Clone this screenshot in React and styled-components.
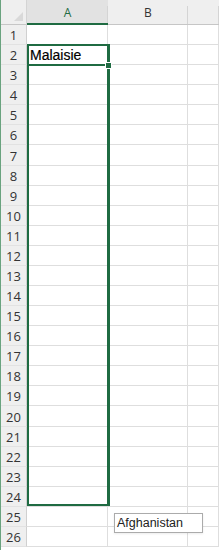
import React from "react";
import styled, { createGlobalStyle } from "styled-components";

const Global = createGlobalStyle`
  html, body { margin: 0; padding: 0; background: #fff; overflow: hidden; }
  #root { width: 219px; height: 550px; }
`;

const GREEN = "#1f6b42";
const GRID = "#dedede";
const HEAD_BG = "#efefef";

const Sheet = styled.div`
  position: relative;
  width: 219px;
  height: 550px;
  overflow: hidden;
  box-sizing: border-box;
  border-left: 1px solid #6aa37f;
  background: #fff;
`;

const Columns = `26px 81px 80px 1fr`;

const HeaderRow = styled.div`
  display: grid;
  grid-template-columns: ${Columns};
  height: 25px;
`;

const Corner = styled.div`
  position: relative;
  background: ${HEAD_BG};
  box-sizing: border-box;
  border-right: 1px solid #d4d4d4;
  border-bottom: 1px solid #c6c6c6;
  &::after {
    content: "";
    position: absolute;
    right: 3px;
    bottom: 3px;
    width: 0;
    height: 0;
    border-left: 9px solid transparent;
    border-bottom: 9px solid #d9d9d9;
  }
`;

const ColHeader = styled.div`
  position: relative;
  display: flex;
  align-items: center;
  justify-content: center;
  box-sizing: border-box;
  padding-top: 1px;
  background: ${(p) => (p.$selected ? "#e2e2e2" : HEAD_BG)};
  border-bottom: ${(p) => (p.$selected ? `2px solid ${GREEN}` : "1px solid #c6c6c6")};
  color: ${(p) => (p.$selected ? GREEN : "#333")};
  font-family: "Open Sans", "Noto Sans", sans-serif;
  font-size: 12px;
  &::after {
    content: "";
    position: absolute;
    right: 0;
    top: 6px;
    bottom: 0;
    width: 1px;
    background: #d4d4d4;
  }
`;

const Row = styled.div`
  display: grid;
  grid-template-columns: ${Columns};
  height: 20.08px;
`;

const RowHeader = styled.div`
  display: flex;
  align-items: center;
  justify-content: center;
  box-sizing: border-box;
  background: ${HEAD_BG};
  border-right: 1px solid #d0d0d0;
  border-bottom: 1px solid #e2e2e2;
  color: #333;
  font-family: "Open Sans", "Noto Sans", sans-serif;
  font-size: 13px;
  padding-top: 1px;
`;

const Cell = styled.div`
  display: flex;
  align-items: flex-end;
  box-sizing: border-box;
  border-right: 1px solid ${GRID};
  border-bottom: 1px solid ${GRID};
  padding: 0 0 1px 3px;
  font-family: "Liberation Sans", Arial, sans-serif;
  font-size: 14px;
  color: #000;
  white-space: nowrap;
  overflow: visible;
  -webkit-text-stroke: 0.2px #000;
`;

const RangeBox = styled.div`
  position: absolute;
  left: 26px;
  top: 44px;
  width: 83px;
  height: 462px;
  box-sizing: border-box;
  border: 2px solid ${GREEN};
  border-right-width: 3px;
  pointer-events: none;
`;

const ActiveBox = styled.div`
  position: absolute;
  left: 26px;
  top: 44px;
  width: 83px;
  height: 22px;
  box-sizing: border-box;
  border: 2px solid ${GREEN};
  border-right-width: 3px;
  pointer-events: none;
`;

const FillHandle = styled.div`
  position: absolute;
  left: 104px;
  top: 62px;
  width: 5px;
  height: 5px;
  background: ${GREEN};
  border: 1px solid #fff;
`;

const Dropdown = styled.div`
  position: absolute;
  left: 113px;
  top: 513px;
  width: 89px;
  height: 20px;
  box-sizing: border-box;
  border: 1px solid #ababab;
  background: #fff;
  box-shadow: 0 1px 2px rgba(0, 0, 0, 0.08);
  display: flex;
  align-items: center;
  padding-left: 2px;
  font-family: "Liberation Sans", Arial, sans-serif;
  font-size: 12.5px;
  color: #222;
`;

const rows = Array.from({ length: 26 }, (_, i) => i + 1);

export default function App() {
  return (
    <>
      <Global />
      <Sheet>
        <HeaderRow>
          <Corner />
          <ColHeader $selected>A</ColHeader>
          <ColHeader>B</ColHeader>
          <ColHeader />
        </HeaderRow>
        {rows.map((n) => (
          <Row key={n}>
            <RowHeader>{n}</RowHeader>
            <Cell>{n === 2 ? "Malaisie" : ""}</Cell>
            <Cell />
            <Cell />
          </Row>
        ))}
        <RangeBox />
        <ActiveBox />
        <FillHandle />
        <Dropdown>Afghanistan</Dropdown>
      </Sheet>
    </>
  );
}
